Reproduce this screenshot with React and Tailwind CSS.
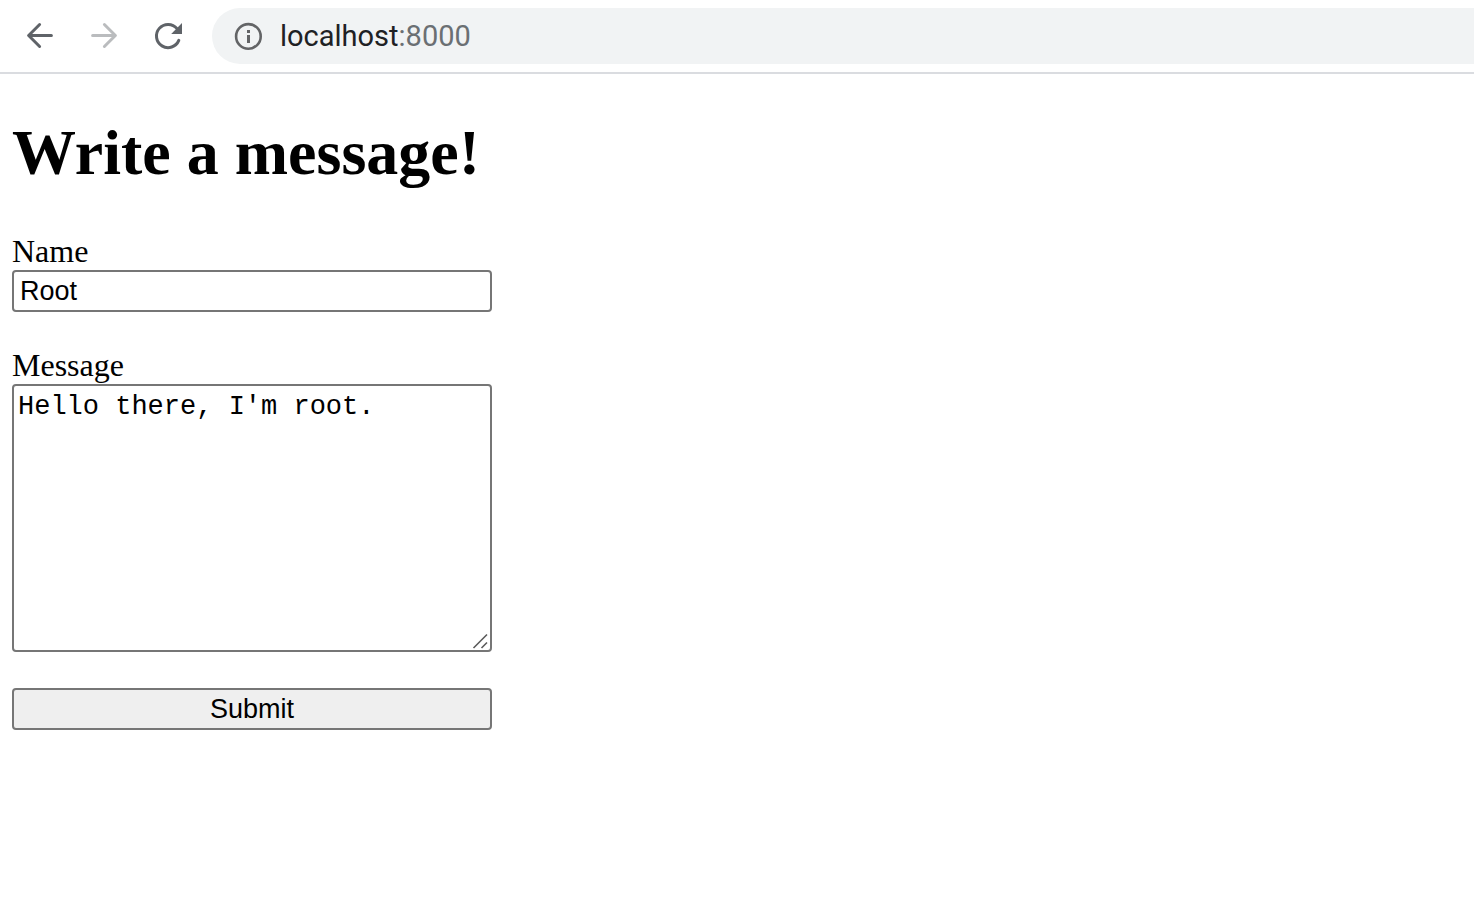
function BackIcon() {
  return (
    <svg viewBox="0 0 32 32" className="size-8" fill="none" stroke="currentColor" strokeWidth="3" strokeLinecap="round" strokeLinejoin="round" aria-hidden="true">
      <path d="M15.6 4.5 4.6 15.5 15.6 26.5M5 15.5h22.4" />
    </svg>
  );
}

function ForwardIcon() {
  return (
    <svg viewBox="0 0 32 32" className="size-8" fill="none" stroke="currentColor" strokeWidth="3" strokeLinecap="round" strokeLinejoin="round" aria-hidden="true">
      <path d="M16.4 4.5 27.4 15.5 16.4 26.5M27 15.5H4.6" />
    </svg>
  );
}

function ReloadIcon() {
  return (
    <svg viewBox="0 0 32 32" className="size-8" aria-hidden="true">
      <path d="M26.8 20.4A11.6 11.6 0 1 1 25 8.6" fill="none" stroke="currentColor" strokeWidth="3" strokeLinecap="round" />
      <path d="M30 3v11H19.2z" fill="currentColor" />
    </svg>
  );
}

function InfoIcon() {
  return (
    <svg viewBox="0 0 28 28" className="size-7" aria-hidden="true">
      <circle cx="14.4" cy="14.4" r="12.3" fill="none" stroke="currentColor" strokeWidth="2.6" />
      <path d="M13 8h3v3h-3zM13 13h3v8h-3z" fill="currentColor" />
    </svg>
  );
}

function Toolbar() {
  return (
    <header className="flex items-center border-b-2 border-[#dadce0] bg-white py-2 pl-2 text-[#5f6368]">
      <div className="flex items-center">
        <button type="button" aria-label="Back" className="flex h-14 w-16 items-center justify-center">
          <BackIcon />
        </button>
        <button type="button" aria-label="Forward" disabled className="flex h-14 w-16 items-center justify-center text-[#babcbe]">
          <ForwardIcon />
        </button>
        <button type="button" aria-label="Reload" className="flex h-14 w-16 items-center justify-center">
          <ReloadIcon />
        </button>
      </div>
      <div className="ml-3 flex h-14 flex-1 items-center rounded-l-full bg-[#f1f3f4] pl-[22px]">
        <button type="button" aria-label="View site information" className="text-[#636466]">
          <InfoIcon />
        </button>
        <div
          role="textbox"
          aria-label="Address"
          contentEditable
          suppressContentEditableWarning
          spellCheck={false}
          className="ml-[18px] flex-1 font-['Roboto',sans-serif] text-[29px] leading-9 text-[#6b6f73] outline-none"
        >
          <span className="text-[#202124]">localhost</span>:8000
        </div>
      </div>
    </header>
  );
}

function MessageForm() {
  return (
    <form className="flex max-w-[480px] flex-col gap-9" onSubmit={(event) => event.preventDefault()}>
      <div className="flex flex-col">
        <label htmlFor="name" className="pb-0.5 text-[32px] leading-[34px]">Name</label>
        <input
          id="name"
          name="name"
          type="text"
          defaultValue="Root"
          className="h-[42px] rounded border-2 border-[#767676] bg-white px-1.5 font-['Liberation_Sans',sans-serif] text-[27px] leading-8"
        />
      </div>
      <div className="flex flex-col">
        <label htmlFor="message" className="pb-0.5 text-[32px] leading-[34px]">Message</label>
        <div className="relative flex">
          <textarea
            id="message"
            name="message"
            defaultValue="Hello there, I'm root."
            className="h-[268px] flex-1 resize-none rounded border-2 border-[#767676] bg-white px-1 py-[5px] font-['Liberation_Mono',monospace] text-[27px] leading-8"
          />
          <svg viewBox="0 0 16 16" className="pointer-events-none absolute right-1 bottom-[3px] size-4" fill="none" stroke="#5c5c5c" strokeWidth="1.6" aria-hidden="true">
            <path d="M1.5 15 15 1.5M9.5 15 15 9.5" />
          </svg>
        </div>
      </div>
      <button
        type="submit"
        className="h-[42px] rounded border-2 border-[#767676] bg-[#efefef] text-center font-['Liberation_Sans',sans-serif] text-[27px] leading-8"
      >
        Submit
      </button>
    </form>
  );
}

export default function App() {
  return (
    <div className="min-h-screen bg-white font-['Liberation_Serif',serif] text-black">
      <Toolbar />
      <main className="flex flex-col gap-[46px] px-3 pt-11 pb-8">
        <h1 className="text-[64px] leading-[70px] font-bold">Write a message!</h1>
        <MessageForm />
      </main>
    </div>
  );
}
